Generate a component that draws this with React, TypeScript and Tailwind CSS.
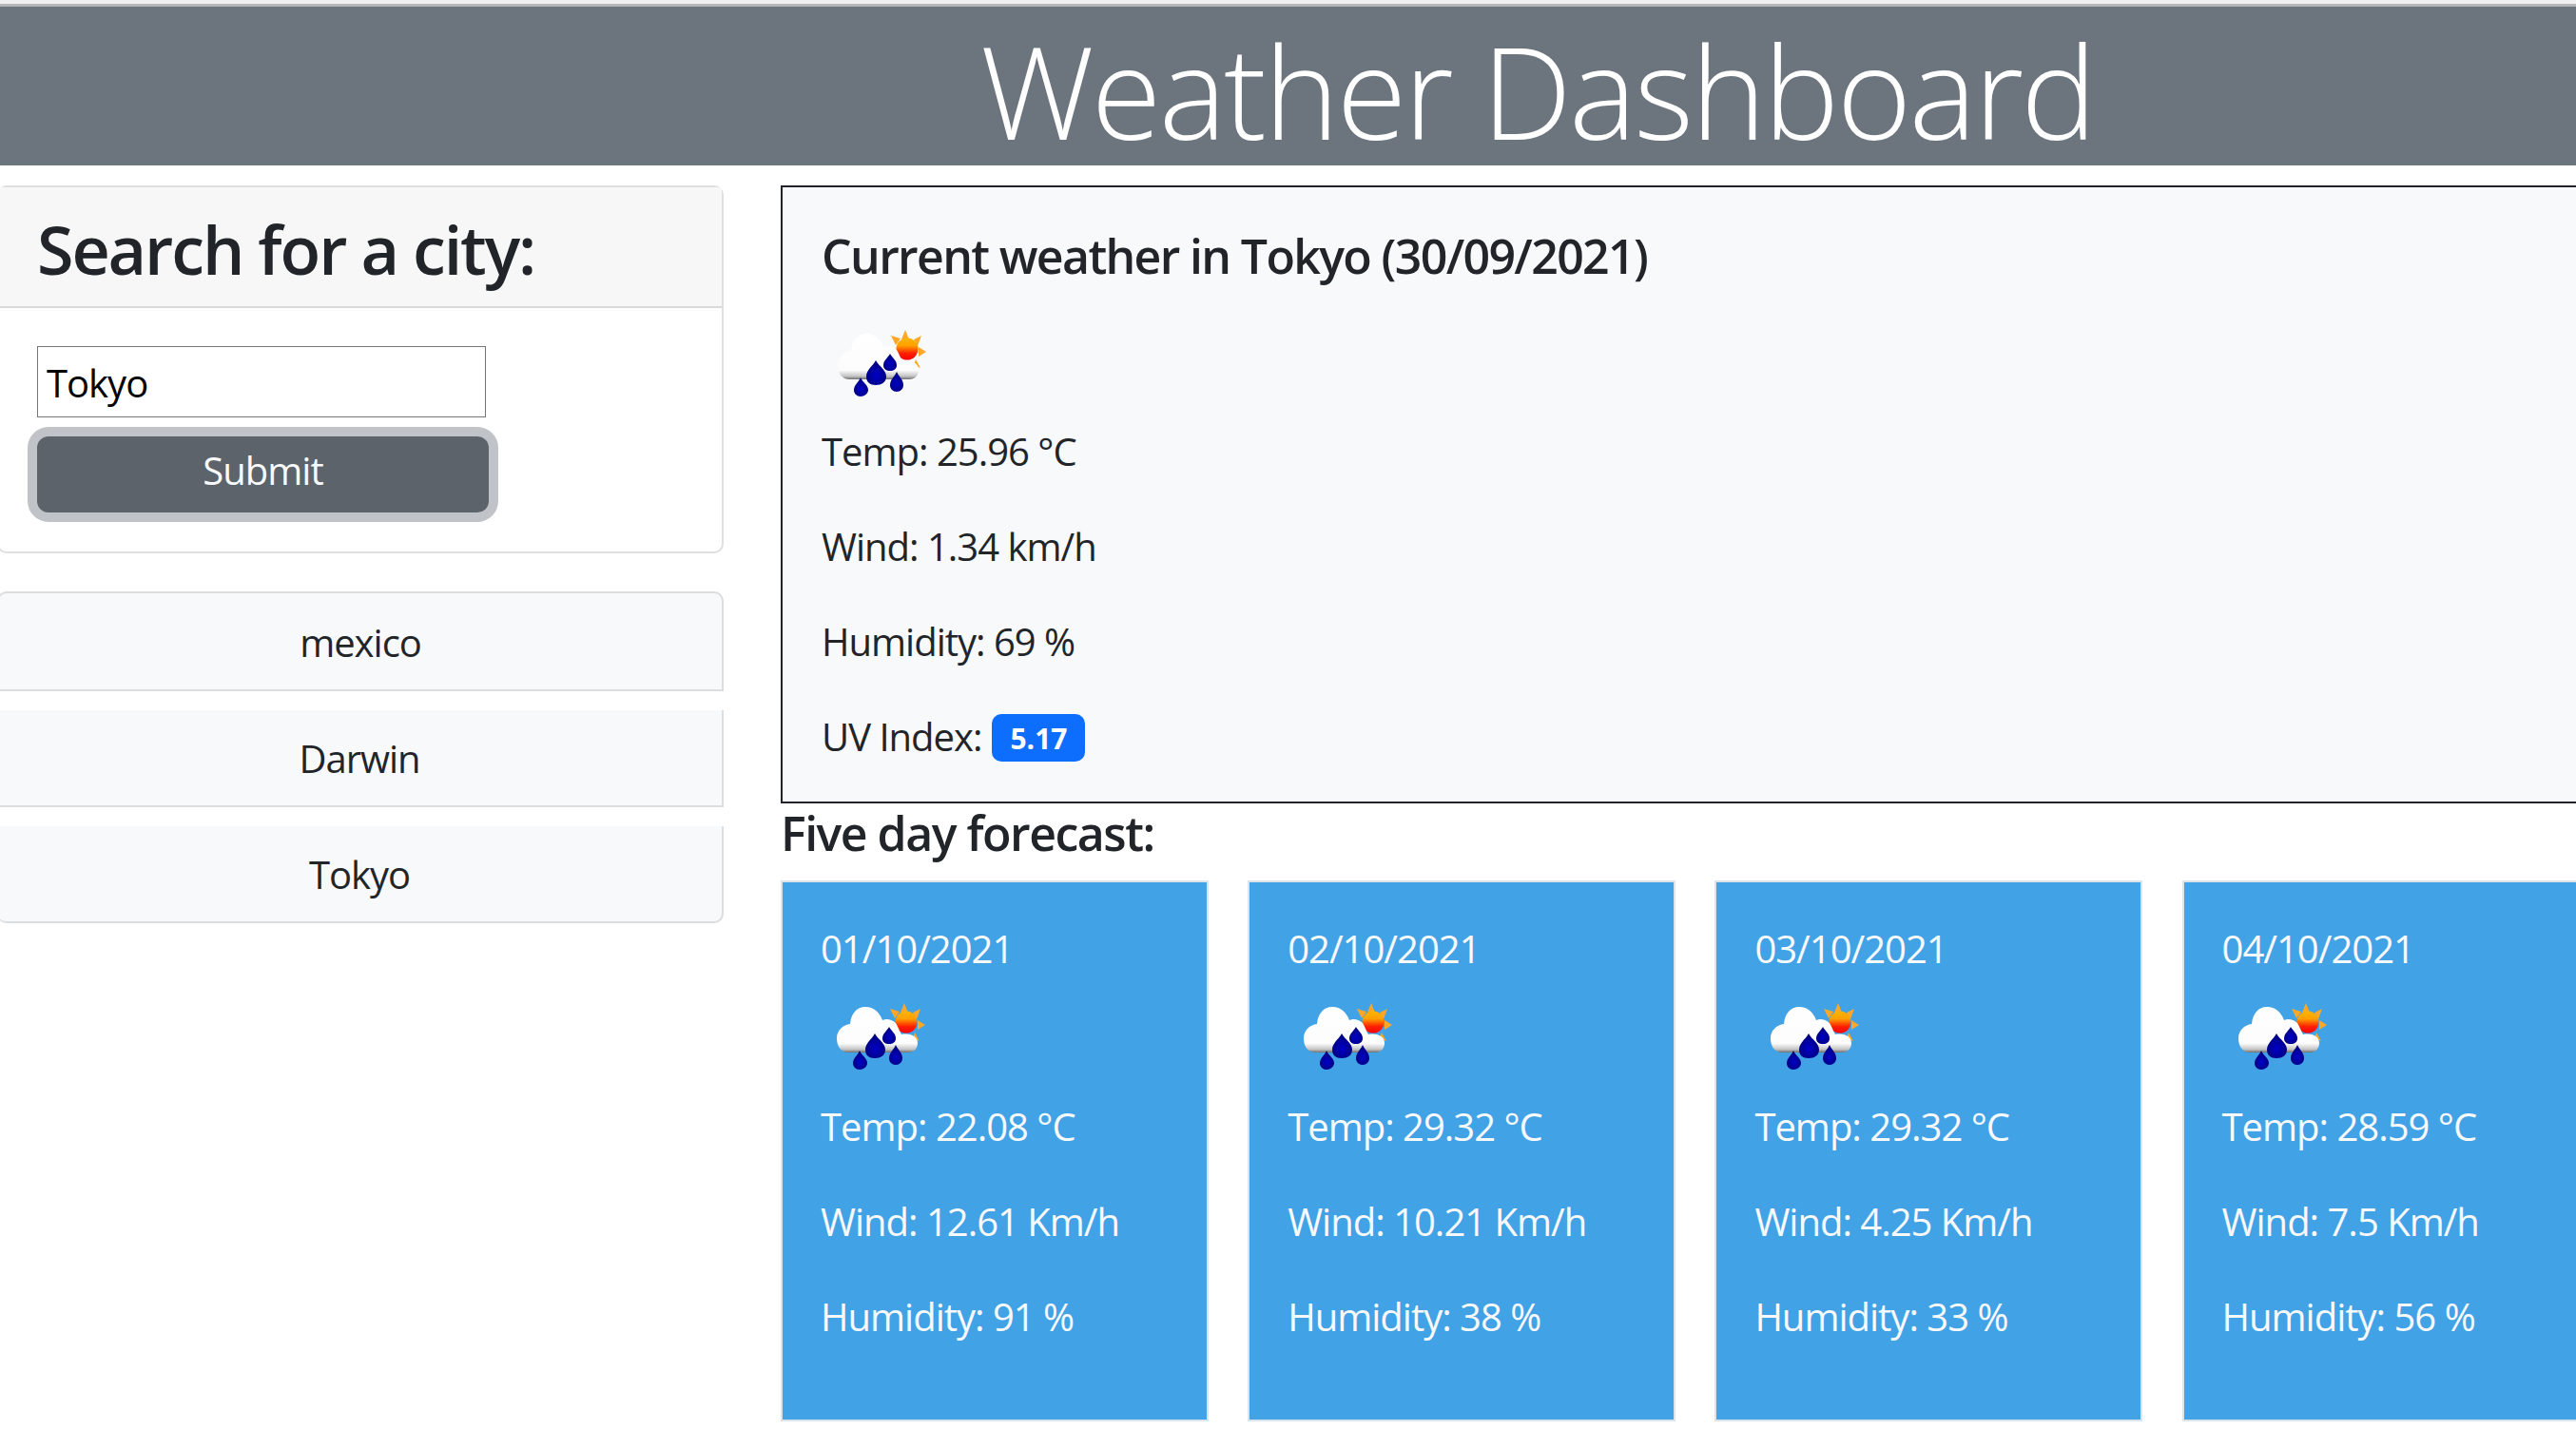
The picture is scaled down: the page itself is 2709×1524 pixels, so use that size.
const font = { fontFamily: '"Open Sans", "Noto Sans", sans-serif' }

function WeatherIcon({ id }: { id: string }) {
  return (
    <svg viewBox="0 0 125 127" className="block h-[127px] w-[125px]">
      <defs>
        <linearGradient id={`${id}-cloud`} x1="0" y1="0" x2="0" y2="1">
          <stop offset="0" stopColor="#ffffff" />
          <stop offset="0.8" stopColor="#fcfcfc" />
          <stop offset="0.93" stopColor="#c4c4c4" />
          <stop offset="1" stopColor="#6e6e6e" />
        </linearGradient>
        <linearGradient id={`${id}-sun`} x1="0" y1="0" x2="0" y2="1">
          <stop offset="0" stopColor="#ffb400" />
          <stop offset="0.35" stopColor="#ffa000" />
          <stop offset="0.7" stopColor="#ff2000" />
          <stop offset="1" stopColor="#ff0000" />
        </linearGradient>
        <radialGradient id={`${id}-drop`} cx="0.5" cy="0.6" r="0.55">
          <stop offset="0" stopColor="#0000c8" />
          <stop offset="0.75" stopColor="#00008f" />
          <stop offset="1" stopColor="#000070" />
        </radialGradient>
        <filter id={`${id}-soft`} x="-10%" y="-10%" width="120%" height="120%">
          <feGaussianBlur stdDeviation="0.7" />
        </filter>
      </defs>
      <g transform="translate(-1 12)" filter={`url(#${id}-soft)`}>
        <g fill="#ffa726">
          <path d="M89 15 L85 25 L93 25 Z" />
          <path d="M74 21 L84 24 L79 31 Z" />
          <path d="M106 21 L98 25 L102 32 Z" />
          <path d="M111 38 L103 33 L103 43 Z" />
          <path d="M105 55 L100 46 L98 52 Z" />
        </g>
        <circle cx="91" cy="35" r="11.5" fill={`url(#${id}-sun)`} />
        <path
          d="M31 67 C21 67 18 59 18 52 C18 44 24 38 32 37 C33 26 39 19 48 19 C57 19 63 25 66 33 C70 31 76 32 80 36 C83 41 84 45 86 48 C97 46 103 51 103 57 C103 63 99 67 93 67 Z"
          fill={`url(#${id}-cloud)`}
        />
        <path d="M58 47 C62 54 69 57 69 64 C69 70 64 73 58 73 C52 73 48 70 48 64 C48 57 54 54 58 47 Z" fill={`url(#${id}-drop)`} />
        <path d="M73 40 C75 44 80 47 80 52 C80 56 77 58 73 58 C69 58 66 56 66 52 C66 47 71 44 73 40 Z" fill={`url(#${id}-drop)`} />
        <path d="M80 59 C82 64 87 67 87 73 C87 77 84 80 80 80 C76 80 73 77 73 73 C73 67 78 64 80 59 Z" fill={`url(#${id}-drop)`} />
        <path d="M42 65 C44 70 50 73 50 78 C50 82 46 85 42 85 C38 85 35 82 35 78 C35 73 40 70 42 65 Z" fill={`url(#${id}-drop)`} />
      </g>
    </svg>
  )
}

const forecast = [
  { date: '01/10/2021', temp: '22.08', wind: '12.61', humidity: '91' },
  { date: '02/10/2021', temp: '29.32', wind: '10.21', humidity: '38' },
  { date: '03/10/2021', temp: '29.32', wind: '4.25', humidity: '33' },
  { date: '04/10/2021', temp: '28.59', wind: '7.5', humidity: '56' },
]

export default function App() {
  return (
    <div style={font} className="h-[1524px] w-[2709px] overflow-hidden bg-white text-[40px] leading-[60px] tracking-[-0.025em] text-[#212529]">
      <div className="h-[4px] bg-[#f0f0f0]" />
      <header className="h-[170px] border-t-[3px] border-[#b4b6b8] bg-[#6c757d] pt-[10px] pl-[1031px]">
        <h1 className="text-[134px] leading-[156px] font-light tracking-[-0.02em] whitespace-nowrap text-white">Weather Dashboard</h1>
      </header>

      <div className="mt-[21px] flex gap-[60px]">
        {/* left column hangs slightly off the page */}
        <aside className="-ml-[3px] w-[764px] shrink-0">
          <section className="h-[387px] rounded-[10px] border-[2.5px] border-[#dfdfdf]">
            <div className="h-[127px] border-b-[2.5px] border-[#d9d9d9] bg-[#f7f7f7] pt-[29px] pl-[40px]">
              <h3 className="text-[70px] leading-[72px] font-semibold tracking-[-0.03em]">Search for a city:</h3>
            </div>
            <div className="pt-[40px] pl-[40px]">
              <div className="flex h-[75px] w-[472px] items-center border-[1.5px] border-[#767676] pt-[2px] pl-[9px] text-black">Tokyo</div>
              <button className="mt-[20px] block h-[80px] w-[475px] rounded-[12px] bg-[#5c636a] pb-[9px] text-[#f8f9fa] ring-[10px] ring-[#c0c3c7]">Submit</button>
            </div>
          </section>

          <div className="mt-[40px] flex flex-col gap-[20px] text-center">
            <div className="flex h-[105px] items-center justify-center rounded-t-[10px] border-[2.5px] border-[#dcdddf] bg-[#f8f9fa] pt-[2px]">mexico</div>
            <div className="flex h-[102px] items-center justify-center border-r-[2.5px] border-b-[2.5px] border-[#dcdddf] bg-[#f8f9fa] pt-[2px]">Darwin</div>
            <div className="flex h-[102px] items-center justify-center rounded-b-[10px] border-r-[2.5px] border-b-[2.5px] border-[#dcdddf] bg-[#f8f9fa] pt-[2px]">Tokyo</div>
          </div>
        </aside>

        <main className="w-[2100px] shrink-0">
          <section className="h-[650px] border-[2.5px] border-[#212529] bg-[#f8f9fa] px-[41px] pt-[42px]">
            <h4 className="h-[81px] text-[50px] leading-[60px] font-semibold tracking-[-0.033em]">Current weather in Tokyo (30/09/2021)</h4>
            <WeatherIcon id="now" />
            <p className="-mt-[2px] mb-[40px]">Temp: 25.96 °C</p>
            <p className="mb-[40px]">Wind: 1.34 km/h</p>
            <p className="mb-[40px]">Humidity: 69 %</p>
            <p className="flex items-center gap-[11px]">
              UV Index:
              <span className="mt-[2px] flex h-[50px] w-[98px] items-center justify-center rounded-[10px] bg-[#0d6efd] pt-[2px] text-[30px] font-bold tracking-normal text-white">5.17</span>
            </p>
          </section>

          <h4 className="mt-[1px] h-[80px] text-[50px] leading-[60px] font-semibold tracking-[-0.03em]">Five day forecast:</h4>

          <div className="flex gap-[41.7px]">
            {forecast.map((day) => (
              <article key={day.date} className="h-[569px] w-[449.5px] shrink-0 border-[2.5px] border-[#dde3ea] bg-[#41a2e6] px-[40px] pt-[40px] text-[#f8f9fa]">
                <p>{day.date}</p>
                <WeatherIcon id={`d${day.date.slice(0, 2)}`} />
                <p className="mb-[40px]">Temp: {day.temp} °C</p>
                <p className="mb-[40px]">Wind: {day.wind} Km/h</p>
                <p>Humidity: {day.humidity} %</p>
              </article>
            ))}
          </div>
        </main>
      </div>
    </div>
  )
}
